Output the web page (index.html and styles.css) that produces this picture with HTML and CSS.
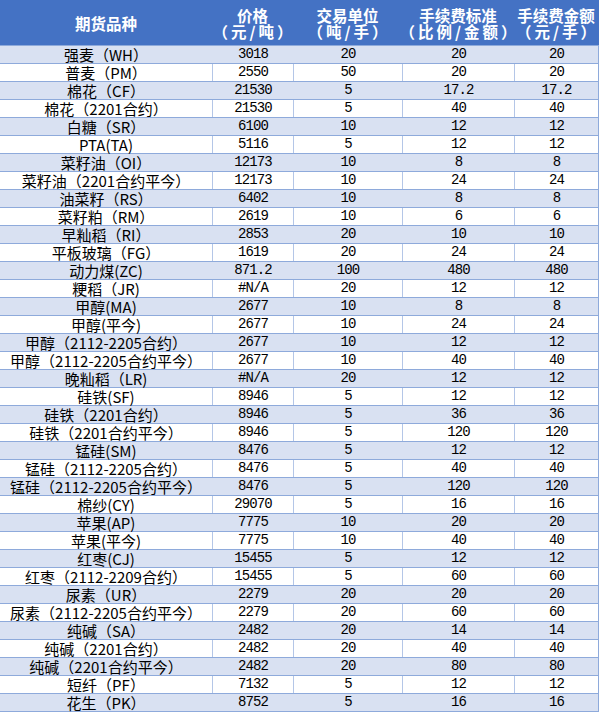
FILE: index.html
```html
<!DOCTYPE html>
<html lang="zh">
<head>
<meta charset="utf-8">
<link rel="stylesheet" href="styles.css">
</head>
<body>
<div class="sheet">
  <div class="row head">
    <div class="c"><span class="ln">期货品种</span></div>
    <div class="c"><span class="ln">价格</span><span class="ln sub">（元/吨）</span></div>
    <div class="c"><span class="ln">交易单位</span><span class="ln sub">（吨/手）</span></div>
    <div class="c"><span class="ln">手续费标准</span><span class="ln sub">（比例/金额）</span></div>
    <div class="c"><span class="ln">手续费金额</span><span class="ln sub">（元/手）</span></div>
  </div>
  <div class="row b"><div class="c n">强麦（WH）</div><div class="c">3018</div><div class="c">20</div><div class="c">20</div><div class="c">20</div></div>
  <div class="row w"><div class="c n">普麦（PM）</div><div class="c">2550</div><div class="c">50</div><div class="c">20</div><div class="c">20</div></div>
  <div class="row b"><div class="c n">棉花（CF）</div><div class="c">21530</div><div class="c">5</div><div class="c">17.2</div><div class="c">17.2</div></div>
  <div class="row w"><div class="c n">棉花（2201合约）</div><div class="c">21530</div><div class="c">5</div><div class="c">40</div><div class="c">40</div></div>
  <div class="row b"><div class="c n">白糖（SR）</div><div class="c">6100</div><div class="c">10</div><div class="c">12</div><div class="c">12</div></div>
  <div class="row w"><div class="c n">PTA(TA)</div><div class="c">5116</div><div class="c">5</div><div class="c">12</div><div class="c">12</div></div>
  <div class="row b"><div class="c n">菜籽油（OI）</div><div class="c">12173</div><div class="c">10</div><div class="c">8</div><div class="c">8</div></div>
  <div class="row w"><div class="c n">菜籽油（2201合约平今）</div><div class="c">12173</div><div class="c">10</div><div class="c">24</div><div class="c">24</div></div>
  <div class="row b"><div class="c n">油菜籽（RS）</div><div class="c">6402</div><div class="c">10</div><div class="c">8</div><div class="c">8</div></div>
  <div class="row w"><div class="c n">菜籽粕（RM）</div><div class="c">2619</div><div class="c">10</div><div class="c">6</div><div class="c">6</div></div>
  <div class="row b"><div class="c n">早籼稻（RI）</div><div class="c">2853</div><div class="c">20</div><div class="c">10</div><div class="c">10</div></div>
  <div class="row w"><div class="c n">平板玻璃（FG）</div><div class="c">1619</div><div class="c">20</div><div class="c">24</div><div class="c">24</div></div>
  <div class="row b"><div class="c n">动力煤(ZC)</div><div class="c">871.2</div><div class="c">100</div><div class="c">480</div><div class="c">480</div></div>
  <div class="row w"><div class="c n">粳稻（JR)</div><div class="c">#N/A</div><div class="c">20</div><div class="c">12</div><div class="c">12</div></div>
  <div class="row b"><div class="c n">甲醇(MA)</div><div class="c">2677</div><div class="c">10</div><div class="c">8</div><div class="c">8</div></div>
  <div class="row w"><div class="c n">甲醇(平今)</div><div class="c">2677</div><div class="c">10</div><div class="c">24</div><div class="c">24</div></div>
  <div class="row b"><div class="c n">甲醇（2112-2205合约）</div><div class="c">2677</div><div class="c">10</div><div class="c">12</div><div class="c">12</div></div>
  <div class="row w"><div class="c n">甲醇（2112-2205合约平今）</div><div class="c">2677</div><div class="c">10</div><div class="c">40</div><div class="c">40</div></div>
  <div class="row b"><div class="c n">晚籼稻（LR)</div><div class="c">#N/A</div><div class="c">20</div><div class="c">12</div><div class="c">12</div></div>
  <div class="row w"><div class="c n">硅铁(SF)</div><div class="c">8946</div><div class="c">5</div><div class="c">12</div><div class="c">12</div></div>
  <div class="row b"><div class="c n">硅铁（2201合约）</div><div class="c">8946</div><div class="c">5</div><div class="c">36</div><div class="c">36</div></div>
  <div class="row w"><div class="c n">硅铁（2201合约平今）</div><div class="c">8946</div><div class="c">5</div><div class="c">120</div><div class="c">120</div></div>
  <div class="row b"><div class="c n">锰硅(SM)</div><div class="c">8476</div><div class="c">5</div><div class="c">12</div><div class="c">12</div></div>
  <div class="row w"><div class="c n">锰硅（2112-2205合约）</div><div class="c">8476</div><div class="c">5</div><div class="c">40</div><div class="c">40</div></div>
  <div class="row b"><div class="c n">锰硅（2112-2205合约平今）</div><div class="c">8476</div><div class="c">5</div><div class="c">120</div><div class="c">120</div></div>
  <div class="row w"><div class="c n">棉纱(CY)</div><div class="c">29070</div><div class="c">5</div><div class="c">16</div><div class="c">16</div></div>
  <div class="row b"><div class="c n">苹果(AP)</div><div class="c">7775</div><div class="c">10</div><div class="c">20</div><div class="c">20</div></div>
  <div class="row w"><div class="c n">苹果(平今)</div><div class="c">7775</div><div class="c">10</div><div class="c">40</div><div class="c">40</div></div>
  <div class="row b"><div class="c n">红枣(CJ)</div><div class="c">15455</div><div class="c">5</div><div class="c">12</div><div class="c">12</div></div>
  <div class="row w"><div class="c n">红枣（2112-2209合约）</div><div class="c">15455</div><div class="c">5</div><div class="c">60</div><div class="c">60</div></div>
  <div class="row b"><div class="c n">尿素（UR）</div><div class="c">2279</div><div class="c">20</div><div class="c">20</div><div class="c">20</div></div>
  <div class="row w"><div class="c n">尿素（2112-2205合约平今）</div><div class="c">2279</div><div class="c">20</div><div class="c">60</div><div class="c">60</div></div>
  <div class="row b"><div class="c n">纯碱（SA）</div><div class="c">2482</div><div class="c">20</div><div class="c">14</div><div class="c">14</div></div>
  <div class="row w"><div class="c n">纯碱（2201合约）</div><div class="c">2482</div><div class="c">20</div><div class="c">40</div><div class="c">40</div></div>
  <div class="row b"><div class="c n">纯碱（2201合约平今）</div><div class="c">2482</div><div class="c">20</div><div class="c">80</div><div class="c">80</div></div>
  <div class="row w"><div class="c n">短纤（PF）</div><div class="c">7132</div><div class="c">5</div><div class="c">12</div><div class="c">12</div></div>
  <div class="row b"><div class="c n">花生（PK）</div><div class="c">8752</div><div class="c">5</div><div class="c">16</div><div class="c">16</div></div>
</div>
</body>
</html>
```
FILE: styles.css
```css
html, body {
  margin: 0;
  padding: 0;
  background: #ffffff;
}
.sheet {
  width: 599px;
  display: flex;
  flex-direction: column;
}
.row {
  display: grid;
  grid-template-columns: 212px 81px 109px 112px 85px;
  height: 17px;
  border-bottom: 1px solid #8eaadb;
  color: #000;
}
.row .c {
  text-align: center;
  line-height: 17px;
  font-size: 14px;
  white-space: nowrap;
  font-family: "Liberation Mono", "Noto Sans CJK SC", monospace;
  letter-spacing: -0.9px;
  overflow: visible;
}
.row .c.n {
  font-family: "Noto Sans CJK SC", sans-serif;
  letter-spacing: 0;
  font-size: 15px;
}
.row .c:last-child {
  border-right: 1px solid #8eaadb;
}
.row.b {
  background: #d9e1f2;
}
.row.w {
  background: #ffffff;
}
.row.w .c + .c {
  border-left: 1px solid #b4c6e7;
}
.row.b .c + .c {
  border-left: 1px solid #d9e1f2;
}
.row.head {
  height: 45px;
  background: #4472c4;
  color: #ffffff;
}
.row.head .c {
  font-family: "Noto Sans CJK SC", sans-serif;
  font-weight: 700;
  font-size: 15.5px;
  letter-spacing: 0;
  display: flex;
  flex-direction: column;
  align-items: center;
  justify-content: center;
  padding-top: 1px;
  border-left: none;
}
.row.head .ln {
  display: block;
  line-height: 16.5px;
}
.row.head .ln.sub {
  letter-spacing: 3px;
  padding-left: 3px;
}
.row.head .c:last-child {
  border-right: 1px solid #4472c4;
}
```
